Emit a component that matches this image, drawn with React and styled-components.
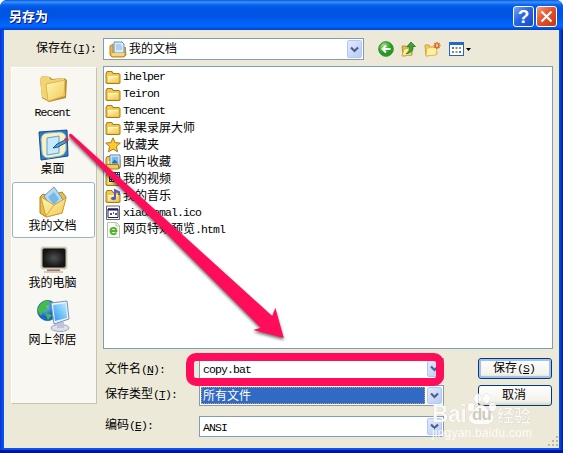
import React from 'react';
import styled, { createGlobalStyle, css } from 'styled-components';

const files = [
  { name: 'ihelper', icon: 'folder' },
  { name: 'Teiron', icon: 'folder' },
  { name: 'Tencent', icon: 'folder' },
  { name: '苹果录屏大师', icon: 'folder' },
  { name: '收藏夹', icon: 'star' },
  { name: '图片收藏', icon: 'pictures' },
  { name: '我的视频', icon: 'videos' },
  { name: '我的音乐', icon: 'music' },
  { name: 'xiaomomal.ico', icon: 'ico' },
  { name: '网页特效预览.html', icon: 'html' }
];

const places = [
  { name: 'Recent', icon: 'recent' },
  { name: '桌面', icon: 'desktop' },
  { name: '我的文档', icon: 'documents', selected: true },
  { name: '我的电脑', icon: 'computer' },
  { name: '网上邻居', icon: 'network' }
];

// Latin runs are half the width of a Chinese character
const Text = ({ children }) =>
  children
    .split(/([\x20-\x7e]+)/)
    .filter(Boolean)
    .map((part, i) =>
      /^[\x20-\x7e]/.test(part) ? <Latin key={i}>{part}</Latin> : part
    );

const FieldLabel = ({ text, hotkey, colon = true }) => (
  <>
    {text}
    <Latin>
      (<Hotkey>{hotkey}</Hotkey>){colon && ':'}
    </Latin>
  </>
);

const FolderShape = () => (
  <>
    <path d="M.5 4.500 2 2h5L8.500 4H14l1.500 1.500V14L14 15H2L.5 14z" fill="#a87a1c" />
    <path d="M1.500 5 2.500 3h4L8 5h6l.5 1V13l-1 1h-11l-1-1z" fill="#f2c94e" />
    <path d="M3 7.500h10v5.500H3z" fill="url(#fold)" />
    <path d="M3 7.500h10" stroke="#fffbd0" />
  </>
);

const fileIcons = {
  folder: <FolderShape />,
  star: (
    <path
      d="m8 .8 2.100 4.800 5.200.5-3.900 3.500 1.100 5.200L8 12.100l-4.500 2.700 1.100-5.200L.7 6.100l5.200-.5z"
      fill="#fcc92e"
      stroke="#a5771c"
    />
  ),
  pictures: (
    <>
      <FolderShape />
      <path d="M5 1h10v12H5z" fill="#fff" stroke="#537fae" />
      <path d="M6.500 2.500h7v7h-7z" fill="#76bcf1" />
      <path d="m6.500 9.500 3-4 4 4z" fill="#277196" />
      <path d="M1.500 10.500h12V15h-12z" fill="#f6cd50" stroke="#a77c28" />
    </>
  ),
  videos: (
    <>
      <FolderShape />
      <path d="M4 1h11v10H4z" fill="#26344f" />
      <path d="M5 4h9v4H5z" fill="#6b9fd5" />
      <path d="M5 2.500h9M5 9.500h9" stroke="#fff" strokeDasharray="1 1" />
    </>
  ),
  music: (
    <>
      <FolderShape />
      <path d="M10 10V2l4 2v3" fill="none" stroke="#575cc0" strokeWidth="2" />
      <ellipse cx="8.500" cy="10.500" rx="2.500" ry="1.800" fill="#575cc0" />
    </>
  ),
  ico: (
    <>
      <path d="M1.500 1h13v13.500h-13z" fill="#fff" stroke="#667" />
      <path d="M3 4h10v8.500H3z" fill="#fff" stroke="#18205c" />
      <path d="M3 4.500h10" stroke="#18205c" strokeWidth="2" />
      <path d="M5 8h2v2H5zM10 8h2v2h-2z" fill="#44548e" />
      <path d="M8 7h1v2H8z" fill="#d33f3f" />
    </>
  ),
  html: (
    <>
      <path d="M2.500.5h9l3 3v12h-12z" fill="#f8fbf6" stroke="#b7c2b5" />
      <path d="M11 .5V4h3" fill="none" stroke="#b7c2b5" />
      <path d="M5.500 9h6c0-4-6-4-6 0 0 4 5 4 5.700 1.500" fill="none" stroke="#53b52a" strokeWidth="1.800" />
    </>
  )
};

const placeIcons = {
  recent: (
    <>
      <path d="m3 7 2-3 8 1 2 2 12-1 3 2-1 18-17 4-7-4z" fill="#b58a30" />
      <path d="m3 7 2-3 7 1 2 3 13-2 1 18-16 5-7-4z" fill="#f3d473" />
      <path d="m9 12 19-4-1 16-16 5z" fill="url(#fold)" stroke="#dfb64c" />
    </>
  ),
  desktop: (
    <>
      <path d="m2 3 28-2 1 26-27 4z" fill="#2d77c8" stroke="#174e96" />
      <path d="M4 10q1-6 7-6l12-1q6 1 6 6v12q-1 5-6 6l-12 2q-6-1-6-6z" fill="#f7f2c4" stroke="#8db1bd" />
      <path d="m10 9 12-2v17l-12 2z" fill="#c8e9fa" stroke="#5b9fd2" />
      <path d="m16 19 4-4 8-4 2 2-9 5z" fill="#5a9fcb" stroke="#175894" />
      <path d="m27 10 3-2 2 3-3 2z" fill="#b93a48" />
    </>
  ),
  documents: (
    <>
      <path d="m3 11 3-3 6 2 13-4 4 5-4 16-16 4-6-4z" fill="#e9bd45" stroke="#b08225" />
      <path d="m7 10 10-9 10 14-10 11z" fill="#b3dcf4" stroke="#7197bf" />
      <path d="m11 11 6-5 5 7-5 6z" fill="#77b8e7" />
      <path d="m4 11 13 8 12-7-4 15-16 4z" fill="url(#fold)" stroke="#d0a23a" />
      <path d="m9 30 8-11" stroke="#d7a83c" />
    </>
  ),
  computer: (
    <>
      <path d="M10 24h13v5H10z" fill="#9e7663" />
      <path d="M7 29h19" stroke="#d6c6ba" strokeWidth="2" />
      <rect x="4" y="4" width="26" height="22" rx="2" fill="#bcb8a8" stroke="#d8d4c4" />
      <rect x="6" y="6" width="22" height="18" rx="1" fill="url(#screen)" stroke="#111" />
      <path d="M27 25h1" stroke="#77ca3f" />
    </>
  ),
  network: (
    <>
      <circle cx="10.500" cy="10.500" r="10" fill="url(#globe)" stroke="#1e64ac" />
      <path d="M3 5q5-6 9-4l2 3-5 2 2 4-5 1-2 5-4-6zM8 13l7 2-4 5z" fill="#42bd42" />
      <ellipse cx="23" cy="28" rx="9" ry="3.500" fill="#dce0ec" stroke="#9ba5bc" />
      <path d="M20 22h7v6h-7z" fill="#bcc5da" />
      <path d="m14 3 16-2 2 18-15 5z" fill="#edf6ff" stroke="#7990bb" />
      <path d="m16 5 13-2 1 15-12 3z" fill="url(#blue)" />
    </>
  )
};

const SvgDefs = () => (
  <HiddenSvg>
    <defs>
      <linearGradient id="fold" x1="0" y1="0" x2="1" y2="1">
        <stop offset="0" stopColor="#fff8b8" />
        <stop offset="1" stopColor="#f1c954" />
      </linearGradient>
      <linearGradient id="blue" x1="0" y1="1" x2="1" y2="0">
        <stop offset="0" stopColor="#2b98ec" />
        <stop offset="1" stopColor="#c0eeff" />
      </linearGradient>
      <radialGradient id="screen">
        <stop offset="0" stopColor="#505050" />
        <stop offset="1" stopColor="#161616" />
      </radialGradient>
      <radialGradient id="globe" cx=".35" cy=".3">
        <stop offset="0" stopColor="#86d2f8" />
        <stop offset="1" stopColor="#1765c4" />
      </radialGradient>
      <radialGradient id="green" cx=".35" cy=".25">
        <stop offset="0" stopColor="#9ae178" />
        <stop offset="1" stopColor="#249b1e" />
      </radialGradient>
    </defs>
  </HiddenSvg>
);

const Dropdown = () => (
  <DropButton>
    <svg width="9" height="7" viewBox="0 0 9 7">
      <path d="m1 1.500 3.500 3.500L8 1.500" fill="none" stroke="#4d6185" strokeWidth="2.200" />
    </svg>
  </DropButton>
);

const Toolbar = () => (
  <Tools>
    <svg width="16" height="16" viewBox="0 0 16 16">
      <circle cx="8" cy="8" r="7.300" fill="url(#green)" stroke="#348b32" />
      <path d="M12.500 8h-7M8 4.500 4.500 8 8 11.500" fill="none" stroke="#fff" strokeWidth="2" />
    </svg>
    <svg width="16" height="16" viewBox="0 0 16 16">
      <path d="M1 5h4l1 1h5v8l-9 1z" fill="#e5b947" stroke="#bd902d" />
      <path d="m3 8 9-2-2 8-9 1z" fill="#fff09b" stroke="#d2ae44" />
      <path d="M5 13q4-3 3.500-7.500H6L10 1l4.500 4.500H12q1 6-7 7.500z" fill="#37a435" stroke="#1b6c22" strokeWidth=".7" />
    </svg>
    <svg width="17" height="16" viewBox="0 0 17 16">
      <path d="M1 4h4l1 2h6l1 7-11 2z" fill="#f4ca5d" stroke="#d39c3b" />
      <path d="m3 7 10-1-1 8-10 1z" fill="#fff1a0" stroke="#e1bd5c" />
      <path d="M13 1v7M9.500 4.500h7M10.500 2l5 5m0-5-5 5" stroke="#dc5b2c" strokeWidth="1.300" />
      <circle cx="13" cy="4.500" r="1.200" fill="#ffdf93" />
    </svg>
    <svg width="24" height="16" viewBox="0 0 24 16">
      <rect x="1.500" y="1.500" width="14" height="13" fill="#fff" stroke="#2866b5" />
      <path d="M1 2.500h15" stroke="#2369cc" strokeWidth="3" />
      <path d="M4 7h2M11 11h2" stroke="#526dd0" strokeWidth="2" />
      <path d="M7.500 7h2M4 11h2" stroke="#54a26a" strokeWidth="2" />
      <path d="M11 7h2M7.500 11h2" stroke="#c48a40" strokeWidth="2" />
      <path d="M18 7h5l-2.500 3z" fill="#000" />
    </svg>
  </Tools>
);

const Watermark = () => (
  <Mark>
    <MarkLogo>
      <MarkBai>Bai</MarkBai>
      <Paw>
        <svg width="29" height="34" viewBox="0 0 29 34">
          <ellipse cx="4" cy="15" rx="3.500" ry="4.500" />
          <ellipse cx="10.500" cy="6.500" rx="3.600" ry="5" />
          <ellipse cx="19.500" cy="6.500" rx="3.600" ry="5" />
          <ellipse cx="25.500" cy="15" rx="3.500" ry="4.500" />
          <path d="M14.500 13c4 0 5 4 8.500 7s5 5 3 9-7 3-11.500 3-10 1-12-3 0-6 3-9 4-7 9-7z" />
        </svg>
        <b>du</b>
      </Paw>
      <MarkCjk>经验</MarkCjk>
    </MarkLogo>
    <MarkUrl>jingyan.baidu.com</MarkUrl>
  </Mark>
);

const App = () => (
  <>
    <GlobalStyle />
    <SvgDefs />
    <Window>
      <TitleBar>
        <Title>另存为</Title>
        <TitleButton>?</TitleButton>
        <TitleButton $close>
          <svg width="13" height="13" viewBox="0 0 13 13">
            <path d="m1.500 1.500 10 10m0-10-10 10" stroke="#fff" strokeWidth="2.200" />
          </svg>
        </TitleButton>
      </TitleBar>
      <Body>
        <LookInRow>
          <LookInLabel>
            <FieldLabel text="保存在" hotkey="I" />
          </LookInLabel>
          <Combo $width={261} $height={22}>
            <svg width="18" height="17" viewBox="0 0 18 17">
              <path d="M1 5 4 3v11h12v-8l1 8-2 2H3l-2-2z" fill="#eabc45" stroke="#b6852b" />
              <path d="M5 1h8l2 2v9H5z" fill="#d9effd" stroke="#6291bd" />
              <path d="M7 4h5M7 6h6M7 8h6" stroke="#82b2dc" />
              <path d="M3 12h12v3H3z" fill="#f8d577" />
            </svg>
            <ComboText>我的文档</ComboText>
            <Dropdown />
          </Combo>
          <Toolbar />
        </LookInRow>
        <Main>
          <Places>
            {places.map((place) => (
              <Place key={place.name} $selected={place.selected}>
                <svg width="33" height="33" viewBox="0 0 33 33">
                  {placeIcons[place.icon]}
                </svg>
                <PlaceName>
                  <Text>{place.name}</Text>
                </PlaceName>
              </Place>
            ))}
          </Places>
          <Content>
            <FileList>
              {files.map((file) => (
                <FileRow key={file.name}>
                  <svg width="16" height="16" viewBox="0 0 16 16">
                    {fileIcons[file.icon]}
                  </svg>
                  <FileName>
                    <Text>{file.name}</Text>
                  </FileName>
                </FileRow>
              ))}
            </FileList>
            <Form>
              <Fields>
                <FieldName>
                  <FieldLabel text="文件名" hotkey="N" />
                </FieldName>
                <Combo $width={245} $height={21}>
                  <ComboText>
                    <Text>copy.bat</Text>
                  </ComboText>
                  <Dropdown />
                </Combo>
                <FieldName>
                  <FieldLabel text="保存类型" hotkey="T" />
                </FieldName>
                <Combo $width={245} $height={21}>
                  <ComboText $selected>所有文件</ComboText>
                  <Dropdown />
                </Combo>
                <FieldName>
                  <FieldLabel text="编码" hotkey="E" />
                </FieldName>
                <Combo $width={245} $height={21}>
                  <ComboText>
                    <Text>ANSI</Text>
                  </ComboText>
                  <Dropdown />
                </Combo>
              </Fields>
              <Actions>
                <Button $primary>
                  <FieldLabel text="保存" hotkey="S" colon={false} />
                </Button>
                <Button>取消</Button>
              </Actions>
            </Form>
          </Content>
        </Main>
      </Body>
      <Grip width="12" height="12" viewBox="0 0 12 12">
        <path
          d="M9 0h2v2H9zM9 4h2v2H9zM9 8h2v2H9zM5 4h2v2H5zM5 8h2v2H5zM1 8h2v2H1z"
          fill="#bfb8a0"
        />
      </Grip>
      <Watermark />
      <Highlight />
      <Arrow width="563" height="453" viewBox="0 0 563 453">
        <path d="M71.500 134 272.300 316 275.300 307.700 283.800 338 253.300 330 260.700 327.700 69 136Q69 133 71.500 134z" />
      </Arrow>
    </Window>
  </>
);

export default App;

const GlobalStyle = createGlobalStyle`
  body {
    margin: 0;
    overflow: hidden;
    background: #fff;
  }

  * {
    box-sizing: border-box;
  }

  svg {
    display: block;
    flex: none;
  }
`;

const HiddenSvg = styled.svg`
  position: absolute;
  width: 0;
  height: 0;
`;

const Window = styled.div`
  position: relative;
  display: flex;
  flex-direction: column;
  width: 563px;
  height: 453px;
  padding: 0 4px 5px;
  border-radius: 7px 7px 0 0;
  overflow: hidden;
  background: linear-gradient(90deg, #0831d9, #0855ed 3px, #0855ed 559px, #001ea0);
  box-shadow: inset 0 -3px 0 #0012a4;
  font-family: 'Noto Sans CJK SC', sans-serif;
  font-size: 12px;
  line-height: 16px;
  color: #000;
`;

const Latin = styled.span`
  font-family: 'Liberation Mono', monospace;
  font-size: 11.5px;
  letter-spacing: -0.9px;
`;

const Hotkey = styled.u`
  text-underline-offset: 1px;
`;

const TitleBar = styled.div`
  display: flex;
  flex: none;
  align-items: center;
  gap: 2px;
  height: 30px;
  margin: 0 -4px;
  padding: 3px 6px 0 9px;
  background: linear-gradient(
    #0758d0 0,
    #3a91ff 2px,
    #0663ef 5px,
    #0054e3 9px,
    #0055e6 17px,
    #0266ff 25px,
    #0261f8 27px,
    #003fc6 30px
  );
`;

const Title = styled.div`
  flex: 1;
  padding-bottom: 2px;
  color: #fff;
  font-size: 13px;
  font-weight: 700;
  text-shadow: 1px 1px #0a1883;
`;

const TitleButton = styled.div`
  display: flex;
  align-items: center;
  justify-content: center;
  width: 21px;
  height: 21px;
  border: 1px solid #fff;
  border-radius: 3px;
  background: ${({ $close }) =>
    $close
      ? 'linear-gradient(135deg, #f09a80, #e5522c 45%, #c53a12)'
      : 'linear-gradient(135deg, #79a3f4, #2b65e2 45%, #174bc8)'};
  color: #fff;
  font-family: 'Liberation Sans', sans-serif;
  font-size: 19px;
  font-weight: 700;
`;

const Body = styled.div`
  display: flex;
  flex: 1;
  flex-direction: column;
  padding: 8px 6px 0 7px;
  background: #ece9d8;
`;

const LookInRow = styled.div`
  display: flex;
  height: 28px;
`;

const LookInLabel = styled.div`
  width: 92px;
  padding: 1px 0 0 25px;
`;

const Combo = styled.div`
  display: flex;
  align-items: center;
  flex: none;
  width: ${({ $width }) => $width}px;
  height: ${({ $height }) => $height}px;
  padding: 1px;
  border: 1px solid #7f9db9;
  background: #fff;

  > svg {
    margin: 0 0 0 4px;
  }
`;

const ComboText = styled.div`
  flex: 1;
  height: 100%;
  margin-right: 2px;
  padding-left: 2px;
  line-height: 15px;
  ${({ $selected }) =>
    $selected &&
    css`
      background: #316ac5;
      color: #fff;
      outline: 1px dotted #d99a4b;
      outline-offset: -1px;
    `}
`;

const DropButton = styled.div`
  display: flex;
  align-items: center;
  justify-content: center;
  width: 15px;
  height: 100%;
  border: 1px solid #b5c7f1;
  border-radius: 2px;
  background: linear-gradient(135deg, #e1eafe, #b9cbf5);
`;

const Tools = styled.div`
  display: flex;
  gap: 7px;
  padding: 3px 0 0 14px;
`;

const Main = styled.div`
  display: flex;
  flex: 1;
  gap: 6px;
`;

const Places = styled.div`
  width: 86px;
  height: 337px;
  margin-top: 1px;
  padding: 0 1px 0 0;
  border: 1px solid #fff;
  border-right-color: #c5c2b2;
  border-bottom-color: #c5c2b2;
  background: #f8f7f2;
`;

const Place = styled.div`
  display: flex;
  flex-direction: column;
  align-items: center;
  height: 56px;
  margin-bottom: 1px;
  padding-top: 3px;
  border: 1px solid ${({ $selected }) => ($selected ? '#98b5c5' : 'transparent')};
  border-radius: 3px;
  background: ${({ $selected }) => ($selected ? '#fff' : 'transparent')};
`;

const PlaceName = styled.span`
  margin-top: -2px;
  padding-right: 2px;
`;

const Content = styled.div`
  flex: 1;
`;

const FileList = styled.div`
  height: 283px;
  padding: 1px;
  border: 1px solid #7f9db9;
  background: #fff;
`;

const FileRow = styled.div`
  display: flex;
  align-items: center;
  gap: 2px;
  height: 17px;
`;

const FileName = styled.span`
  padding-bottom: 2px;
`;

const Form = styled.div`
  display: flex;
  justify-content: space-between;
  padding-top: 9px;
`;

const Fields = styled.div`
  display: grid;
  grid-template-columns: 96px 245px;
  grid-template-rows: 27px 31px 21px;
`;

const FieldName = styled.div`
  padding-left: 2px;

  &:first-child {
    padding-top: 2px;
  }
`;

const Actions = styled.div`
  display: flex;
  flex-direction: column;
  gap: 6px;
  padding-right: 1px;
`;

const Button = styled.div`
  width: 74px;
  height: 21px;
  padding-right: 2px;
  border: 1px solid #003c74;
  border-radius: 3px;
  background: linear-gradient(#fff, #f3f2ea 80%, #dcd5c8);
  line-height: 16px;
  text-align: center;
  ${({ $primary }) =>
    $primary &&
    css`
      box-shadow: inset 0 0 0 2px #a5bff0;
    `}
`;

const Grip = styled.svg`
  position: absolute;
  right: 4px;
  bottom: 5px;
`;

const Highlight = styled.div`
  position: absolute;
  top: 353px;
  left: 186px;
  width: 258px;
  height: 33px;
  border: 8px solid #ff0d5b;
  border-radius: 10px;
`;

const Arrow = styled.svg`
  position: absolute;
  inset: 0;
  fill: #ff0d5b;
  filter: drop-shadow(0 2px 1.5px rgba(0, 0, 0, 0.55));
`;

const Mark = styled.div`
  position: absolute;
  top: 392px;
  left: 432px;
  width: 104px;
  opacity: 0.85;
  color: #fff;
  font-family: 'Liberation Sans', sans-serif;
`;

const MarkLogo = styled.div`
  display: flex;
  align-items: flex-end;
  height: 34px;
  font-size: 23px;
  font-weight: 700;
  line-height: 23px;
  filter: drop-shadow(0 0 0.6px #a09f92);
`;

const MarkBai = styled.span`
  width: 35px;
  letter-spacing: -0.5px;
`;

const Paw = styled.div`
  position: relative;
  fill: #fff;

  b {
    position: absolute;
    bottom: 3px;
    left: 5px;
    color: #c8c8ba;
    font-size: 17px;
    font-weight: 700;
    letter-spacing: -0.8px;
    line-height: 16px;
  }
`;

const MarkCjk = styled.span`
  padding-left: 1px;
  font-family: 'Noto Sans CJK SC', sans-serif;
  font-size: 17px;
  font-weight: 500;
`;

const MarkUrl = styled.div`
  font-size: 12px;
  letter-spacing: 0.2px;
  line-height: 15px;
`;
